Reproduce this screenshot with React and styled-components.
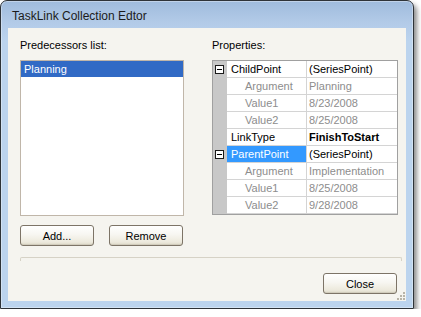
import React from 'react';
import styled, { createGlobalStyle } from 'styled-components';

const GlobalStyle = createGlobalStyle`
  html, body {
    margin: 0;
    padding: 0;
    background: #ffffff;
  }
  body {
    font-family: "Liberation Sans", Arial, sans-serif;
    font-size: 11px;
  }
`;

const Window = styled.div`
  box-sizing: border-box;
  width: 414px;
  height: 309px;
  display: flex;
  flex-direction: column;
  padding: 0 7px 7px 7px;
  border: 1px solid #2e3338;
  border-radius: 7px 7px 0 0;
  background: linear-gradient(to bottom, #9fbbdd 0px, #b3cbe8 22px, #bcd4ee 40px, #bcd4ee 100%);
  box-shadow: inset 0 0 0 1px rgba(255, 255, 255, 0.35), 3px 4px 5px rgba(0, 0, 0, 0.45);
`;

const TitleBar = styled.div`
  height: 27px;
  display: flex;
  align-items: center;
  padding-left: 4px;
  padding-top: 2px;
  box-sizing: border-box;
  font-size: 12px;
  color: #1b1b1b;
  white-space: nowrap;
`;

const Client = styled.div`
  flex: 1;
  box-sizing: border-box;
  background: #f5f4ef;
  padding: 10px 9px 0 12px;
  display: flex;
  flex-direction: column;
  position: relative;
`;

const Columns = styled.div`
  display: grid;
  grid-template-columns: 164px 186px;
  column-gap: 28px;
`;

const Label = styled.div`
  line-height: 14px;
  height: 14px;
  margin-bottom: 8px;
  color: #000;
`;

const ListBox = styled.div`
  box-sizing: border-box;
  height: 156px;
  border: 1px solid #c0b6a9;
  background: #fff;
`;

const ListItem = styled.div`
  height: 16px;
  line-height: 16px;
  padding-left: 3px;
  color: ${({ selected }) => (selected ? '#fff' : '#000')};
  background: ${({ selected }) => (selected ? '#316ac5' : 'transparent')};
`;

const Grid = styled.div`
  box-sizing: border-box;
  height: 155px;
  border: 1px solid #a0a0a0;
  background: #fff;
  display: flex;
  flex-direction: column;
`;

const GridRow = styled.div`
  display: flex;
  height: 17px;
`;

const Gutter = styled.div`
  width: 14px;
  flex: none;
  background: #c8c8c8;
  position: relative;
`;

const Expander = styled.div`
  position: absolute;
  left: 2px;
  top: 4px;
  width: 9px;
  height: 9px;
  box-sizing: border-box;
  border: 1px solid #1a1a1a;
  background: #fff;
  &::after {
    content: '';
    position: absolute;
    left: 1px;
    top: 3px;
    width: 5px;
    height: 1px;
    background: #000;
  }
`;

const NameCell = styled.div`
  width: 80px;
  flex: none;
  box-sizing: border-box;
  border-right: 1px solid #d4d4d4;
  border-bottom: 1px solid #d4d4d4;
  line-height: 16px;
  padding-left: ${({ sub }) => (sub ? '18px' : '4px')};
  color: ${({ selected, sub }) => (selected ? '#fff' : sub ? '#8d8d8d' : '#000')};
  background: ${({ selected }) => (selected ? '#3399ff' : '#fff')};
  white-space: nowrap;
  overflow: hidden;
`;

const ValueCell = styled.div`
  flex: 1;
  box-sizing: border-box;
  border-bottom: 1px solid #d4d4d4;
  line-height: 16px;
  padding-left: 2px;
  color: ${({ sub }) => (sub ? '#8d8d8d' : '#000')};
  font-weight: ${({ bold }) => (bold ? 'bold' : 'normal')};
  white-space: nowrap;
  overflow: hidden;
`;

const ButtonRow = styled.div`
  display: flex;
  gap: 15px;
  margin-top: 9px;
`;

const Button = styled.button`
  box-sizing: border-box;
  width: 74px;
  height: 21px;
  padding: 0;
  font-family: "Liberation Sans", Arial, sans-serif;
  font-size: 11px;
  color: #000;
  border: 1px solid #7d7467;
  border-radius: 3px;
  background: linear-gradient(to bottom, #ffffff 0%, #f7f6f1 45%, #ece9dc 85%, #dcd7c6 100%);
  box-shadow: inset 0 -1px 0 rgba(200, 195, 180, 0.6);
`;

const GroupEdge = styled.div`
  height: 3px;
  margin-top: 11px;
  margin-right: -5px;
  border: 1px solid #d6d2c6;
  border-bottom: none;
  border-radius: 2px 2px 0 0;
`;

const Footer = styled.div`
  display: flex;
  justify-content: flex-end;
  margin-top: 12px;
`;

const Grip = styled.svg`
  position: absolute;
  right: 1px;
  bottom: 1px;
`;

const rows = [
  { name: 'ChildPoint', value: '(SeriesPoint)', expander: true },
  { name: 'Argument', value: 'Planning', sub: true },
  { name: 'Value1', value: '8/23/2008', sub: true },
  { name: 'Value2', value: '8/25/2008', sub: true },
  { name: 'LinkType', value: 'FinishToStart', bold: true },
  { name: 'ParentPoint', value: '(SeriesPoint)', expander: true, selected: true },
  { name: 'Argument', value: 'Implementation', sub: true },
  { name: 'Value1', value: '8/25/2008', sub: true },
  { name: 'Value2', value: '9/28/2008', sub: true },
];

const gripDots = [
  [6, 0], [6, 3], [3, 3], [6, 6], [3, 6], [0, 6],
];

export default function App() {
  return (
    <>
      <GlobalStyle />
      <Window>
        <TitleBar>TaskLink Collection Edtor</TitleBar>
        <Client>
          <Columns>
            <div>
              <Label>Predecessors list:</Label>
              <ListBox>
                <ListItem selected>Planning</ListItem>
              </ListBox>
            </div>
            <div>
              <Label>Properties:</Label>
              <Grid>
                {rows.map((r, i) => (
                  <GridRow key={i}>
                    <Gutter>{r.expander && <Expander />}</Gutter>
                    <NameCell sub={r.sub} selected={r.selected}>{r.name}</NameCell>
                    <ValueCell sub={r.sub} bold={r.bold}>{r.value}</ValueCell>
                  </GridRow>
                ))}
              </Grid>
            </div>
          </Columns>
          <ButtonRow>
            <Button>Add...</Button>
            <Button>Remove</Button>
          </ButtonRow>
          <GroupEdge />
          <Footer>
            <Button>Close</Button>
          </Footer>
          <Grip width="8" height="8" viewBox="0 0 8 8">
            {gripDots.map(([x, y], i) => (
              <rect key={i} x={x} y={y} width="2" height="2" fill="#b8b4a8" />
            ))}
          </Grip>
        </Client>
      </Window>
    </>
  );
}
